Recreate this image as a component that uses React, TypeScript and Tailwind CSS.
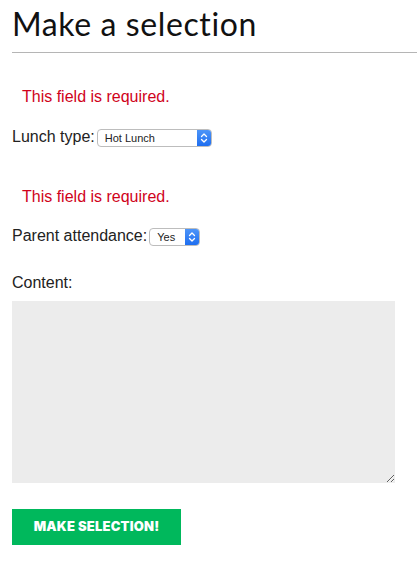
import React from 'react';

function FakeSelect({ value, width }: { value: string; width: string }) {
  return (
    <div className={`inline-flex items-stretch h-[18px] ${width} rounded-[4px] border border-[#bdbdbd] bg-white overflow-hidden align-middle`}>
      <span className="flex-1 pl-[7px] text-[11px] leading-[16px] text-[#222]">{value}</span>
      <span className="w-[14px] bg-gradient-to-b from-[#4c94f8] to-[#1e6ef0] flex items-center justify-center">
        <svg width="8" height="12" viewBox="0 0 8 12" fill="none" stroke="white" strokeWidth="1.3" strokeLinecap="round" strokeLinejoin="round">
          <path d="M1.5 4.5 L4 2 L6.5 4.5" />
          <path d="M1.5 7.5 L4 10 L6.5 7.5" />
        </svg>
      </span>
    </div>
  );
}

export default function App() {
  return (
    <div className="w-[417px] min-h-[563px] bg-white pl-3 text-black" style={{ fontFamily: '"Liberation Sans", Arial, sans-serif' }}>
      <h1 className="pt-[5px] text-[32px] leading-[38px] tracking-[0.6px] text-[#111]" style={{ fontFamily: 'Lato, "Noto Sans", sans-serif' }}>
        Make a selection
      </h1>
      <hr className="mt-[9px] border-0 border-t border-[#b5b5b5]" />

      <p className="mt-[34px] pl-[10px] text-[16px] leading-[20px] text-[#d0021b]">This field is required.</p>
      <div className="mt-[20px] flex items-center h-[20px] text-[16px] text-[#222]">
        <span>Lunch type:</span>
        <span className="ml-[2px]"><FakeSelect value="Hot Lunch" width="w-[115px]" /></span>
      </div>

      <p className="mt-[40px] pl-[10px] text-[16px] leading-[20px] text-[#d0021b]">This field is required.</p>
      <div className="mt-[19px] flex items-center h-[20px] text-[16px] text-[#222]">
        <span>Parent attendance:</span>
        <span className="ml-[2px]"><FakeSelect value="Yes" width="w-[51px]" /></span>
      </div>

      <p className="mt-[27px] text-[16px] leading-[20px] text-[#222]">Content:</p>
      <textarea className="mt-[8px] block w-[383px] h-[182px] bg-[#ececec] border-0 outline-none resize-y" />

      <button className="mt-[26px] w-[169px] h-[36px] bg-[#00b85c] text-white text-[13px] font-black tracking-[0.2px] uppercase" style={{ fontFamily: 'Inter, Roboto, sans-serif' }}>
        Make selection!
      </button>
    </div>
  );
}
